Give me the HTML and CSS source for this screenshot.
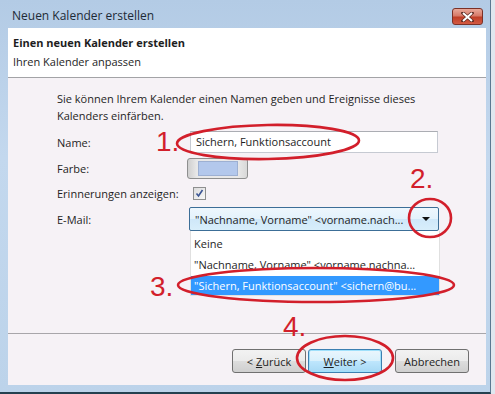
FILE: index.html
```html
<!DOCTYPE html>
<html lang="de">
<head>
    <meta charset="UTF-8">
    <title>Neuen Kalender erstellen</title>
    <link rel="stylesheet" href="styles.css">
</head>
<body>

    <div class="window">
        <div class="titlebar">
            <span class="title">Neuen Kalender erstellen</span>
            <div class="close">
                <svg width="13" height="10" viewBox="0 0 13 10">
                    <path d="M2 1 L11 9 M11 1 L2 9" stroke="#5a2a22" stroke-width="3.4" stroke-linecap="square"/>
                    <path d="M2 1 L11 9 M11 1 L2 9" stroke="#fff" stroke-width="2"/>
                </svg>
            </div>
        </div>

        <div class="client">
            <div class="header">
                <h1>Einen neuen Kalender erstellen</h1>
                <p>Ihren Kalender anpassen</p>
            </div>

            <div class="content">
                <p class="intro">Sie können Ihrem Kalender einen Namen geben und Ereignisse dieses<br>Kalenders einfärben.</p>

                <div class="row">
                    <span class="label">Name:</span>
                    <div class="textbox">Sichern, Funktionsaccount</div>
                </div>
                <div class="row">
                    <span class="label">Farbe:</span>
                    <div class="colorpick"><span class="swatch"></span></div>
                </div>
                <div class="row row-short">
                    <span class="label">Erinnerungen anzeigen:</span>
                    <div class="checkbox">
                        <svg width="9" height="9" viewBox="0 0 9 9">
                            <path d="M1.5 4.5 L3.5 7 L7.5 1" fill="none" stroke="#3b5594" stroke-width="1.6"/>
                        </svg>
                    </div>
                </div>
                <div class="row">
                    <span class="label">E-Mail:</span>
                    <div class="combo">
                        <span class="combo-text">"Nachname, Vorname" &lt;vorname.nach...</span>
                        <span class="arrow"></span>
                        <ul class="droplist">
                            <li>Keine</li>
                            <li>"Nachname, Vorname" &lt;vorname.nachna...</li>
                            <li class="selected">"Sichern, Funktionsaccount" &lt;sichern@bu...</li>
                        </ul>
                    </div>
                </div>
            </div>

            <div class="footer">
                <button class="btn"><span class="ul">&lt; <u>Z</u>urück</span></button>
                <button class="btn btn-default"><u>W</u>eiter &gt;</button>
                <button class="btn btn-cancel">Abbrechen</button>
            </div>
        </div>

        <!-- rote Markierungen -->
        <svg class="marks" width="495" height="394" viewBox="0 0 495 394">
            <g fill="none" stroke="#d21f2b" stroke-width="2.6">
                <ellipse cx="268" cy="142" rx="91" ry="17" transform="rotate(-1 268 142)"/>
                <ellipse cx="430" cy="218" rx="21" ry="19"/>
                <ellipse cx="316" cy="285" rx="138" ry="17"/>
                <ellipse cx="345" cy="358" rx="48" ry="22"/>
            </g>
            <g class="mark-num" fill="#d21f2b">
                <text x="156" y="151">1.</text>
                <text x="410" y="188">2.</text>
                <text x="150" y="296">3.</text>
                <text x="283" y="336">4.</text>
            </g>
        </svg>
    </div>

</body>
</html>
```

FILE: styles.css
```css
body {
    margin: 0;
    background-color: #dfe7ef;
    font-family: 'Open Sans', sans-serif;
    font-size: 11px;
    color: #1e1e1e;
}

.window {
    position: relative;
    width: 490px;
    height: 392px;
    border-right: 1px solid #5a7891;
    border-bottom: 2px solid #24404f;
    background: linear-gradient(180deg, #b3cbe5 0%, #c3d8ee 40%, #bcd3ea 100%);
    display: flex;
    flex-direction: column;
}

.titlebar {
    height: 28px;
    display: flex;
    justify-content: space-between;
    align-items: flex-start;
}

.title {
    margin: 7px 0 0 12px;
    font-size: 12px;
    color: #1d2a36;
}

.close {
    margin: 8px 7px 0 0;
    width: 29px;
    height: 15px;
    border: 1px solid #7b3127;
    border-radius: 3px;
    background: linear-gradient(180deg, #e9a99a 0%, #d77a68 45%, #c03e26 55%, #d25a43 100%);
    display: flex;
    align-items: center;
    justify-content: center;
}

.client {
    flex: 1;
    margin: 0 4px 7px 8px;
    background-color: #f6f2f6;
    display: flex;
    flex-direction: column;
}

.header {
    height: 50px;
    background-color: #fff;
    border-bottom: 1px solid #a3a3a6;
    padding-left: 5px;
    box-sizing: border-box;
}

.header h1 {
    margin: 0;
    padding-top: 6px;
    font-size: 11px;
    font-weight: bold;
    line-height: 18px;
}

.header p {
    margin: 0;
    line-height: 19px;
}

.content {
    flex: 1;
    padding: 12px 0 0 49px;
}

.intro {
    margin: 0 0 5px;
    line-height: 17px;
}

.row {
    display: flex;
    align-items: center;
    height: 26px;
}

.row-short {
    height: 25px;
}

.label {
    width: 132px;
    flex-shrink: 0;
}

.textbox {
    width: 241px;
    height: 20px;
    margin-left: 1px;
    padding-left: 5px;
    border: 1px solid #c6cad2;
    border-top-color: #abadb3;
    background-color: #fff;
    line-height: 20px;
}

.colorpick {
    width: 59px;
    height: 19px;
    margin-left: -2px;
    border: 1px solid #8e8f8f;
    border-radius: 3px;
    background: linear-gradient(90deg, #cfcfcf 0%, #e8e8e8 15%, #e8e8e8 85%, #d8d8d8 100%);
    display: flex;
    align-items: center;
    justify-content: center;
}

.swatch {
    width: 40px;
    height: 15px;
    background-color: #b3c8ec;
    border: 1px solid #9db0d2;
    box-sizing: border-box;
}

.checkbox {
    width: 11px;
    height: 11px;
    margin-left: 4px;
    border: 1px solid #8e8f8f;
    background: linear-gradient(135deg, #dcdcdc, #f8f8f8);
    display: flex;
    align-items: center;
    justify-content: center;
}

.combo {
    position: relative;
    width: 248px;
    height: 22px;
    border: 1px solid #3c6e97;
    border-radius: 2px;
    background: linear-gradient(180deg, #eef7fd 0%, #e3f2fc 50%, #cfe8f9 51%, #d8eefb 100%);
    display: flex;
    align-items: center;
}

.combo-text {
    flex: 1;
    padding-left: 5px;
    white-space: nowrap;
}

.arrow {
    width: 0;
    height: 0;
    margin-right: 8px;
    border-left: 4px solid transparent;
    border-right: 4px solid transparent;
    border-top: 4px solid #111;
}

.droplist {
    position: absolute;
    top: 23px;
    left: 0;
    width: 250px;
    margin: 0;
    padding: 2px 0 0;
    list-style: none;
    background-color: #fff;
    border: 1px solid #e0e0e0;
    border-top: none;
    box-sizing: border-box;
}

.droplist li {
    height: 21px;
    line-height: 21px;
    padding-left: 3px;
    white-space: nowrap;
}

.droplist .selected {
    height: 19px;
    line-height: 19px;
    margin-top: 1px;
    background-color: #3399ff;
    color: #fff;
}

.footer {
    height: 52px;
    border-top: 1px solid #a8a6aa;
    box-sizing: border-box;
    display: flex;
    align-items: flex-start;
    padding: 15px 16px 0 224px;
}

.btn {
    width: 74px;
    height: 24px;
    padding: 0;
    font-family: inherit;
    font-size: 11px;
    color: #1e1e1e;
    border: 1px solid #707070;
    border-radius: 3px;
    background: linear-gradient(180deg, #f2f2f2 0%, #ebebeb 50%, #dddddd 51%, #cfcfcf 100%);
}

.btn-default {
    margin-left: 2px;
    border-color: #3c7fb1;
    box-shadow: inset 0 0 0 1px #9fe0fb;
    background: linear-gradient(180deg, #eaf6fd 0%, #d9f0fc 50%, #bee6fd 51%, #a7d9f5 100%);
}

.btn-cancel {
    margin-left: 13px;
}

.marks {
    position: absolute;
    top: 0;
    left: 0;
    pointer-events: none;
}

.mark-num {
    font-family: 'Liberation Sans', sans-serif;
    font-size: 28px;
}
```
